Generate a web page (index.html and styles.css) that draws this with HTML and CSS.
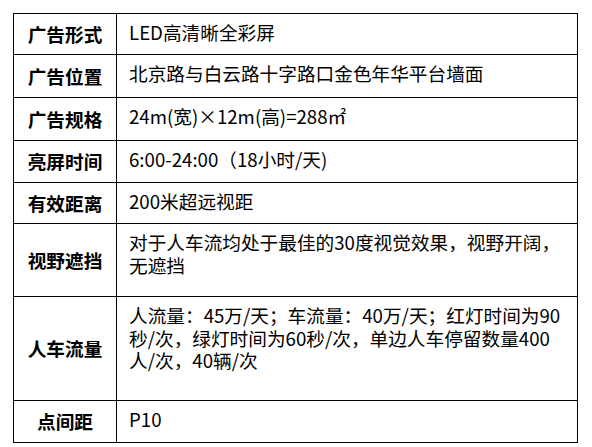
FILE: index.html
```html
<!DOCTYPE html>
<html lang="zh-CN">
<head>
<meta charset="utf-8">
<title>广告信息</title>
<link rel="stylesheet" href="styles.css">
</head>
<body>
<table class="spec">
  <tr class="r41">
    <th class="label">广告形式</th>
    <td class="value">LED高清晰全彩屏</td>
  </tr>
  <tr class="r43">
    <th class="label">广告位置</th>
    <td class="value">北京路与白云路十字路口金色年华平台墙面</td>
  </tr>
  <tr class="r43">
    <th class="label">广告规格</th>
    <td class="value">24m(宽)×12m(高)=288㎡</td>
  </tr>
  <tr class="r42">
    <th class="label">亮屏时间</th>
    <td class="value">6:00-24:00（18小时/天)</td>
  </tr>
  <tr class="r41">
    <th class="label">有效距离</th>
    <td class="value">200米超远视距</td>
  </tr>
  <tr class="r73">
    <th class="label">视野遮挡</th>
    <td class="value">对于人车流均处于最佳的30度视觉效果，视野开阔，<br>无遮挡</td>
  </tr>
  <tr class="r104">
    <th class="label">人车流量</th>
    <td class="value">人流量：45万/天；车流量：40万/天；红灯时间为90<br>秒/次，绿灯时间为60秒/次，单边人车停留数量400<br>人/次，40辆/次</td>
  </tr>
  <tr class="r42">
    <th class="label">点间距</th>
    <td class="value">P10</td>
  </tr>
</table>
</body>
</html>
```

FILE: styles.css
```css
html, body {
  margin: 0;
  padding: 0;
  background: #ffffff;
}

body {
  padding: 13px 0 0 13px;
  font-family: "Noto Sans CJK SC", "Noto Sans", sans-serif;
  font-size: 18.67px;
  color: #000000;
}

.spec {
  border-collapse: collapse;
  width: 565px;
  table-layout: fixed;
}

.spec th,
.spec td {
  border: 1px solid #000000;
  padding: 0;
  line-height: 22.5px;
}

.label {
  width: 102px;
  font-weight: bold;
  text-align: center;
  vertical-align: middle;
}

.value {
  text-align: left;
  vertical-align: top;
  padding: 7px 0 0 12px !important;
  white-space: nowrap;
}

.r41 { height: 41px; }
.r42 { height: 42px; }
.r43 { height: 43px; }
.r73 { height: 73px; }
.r104 { height: 104px; }
```
